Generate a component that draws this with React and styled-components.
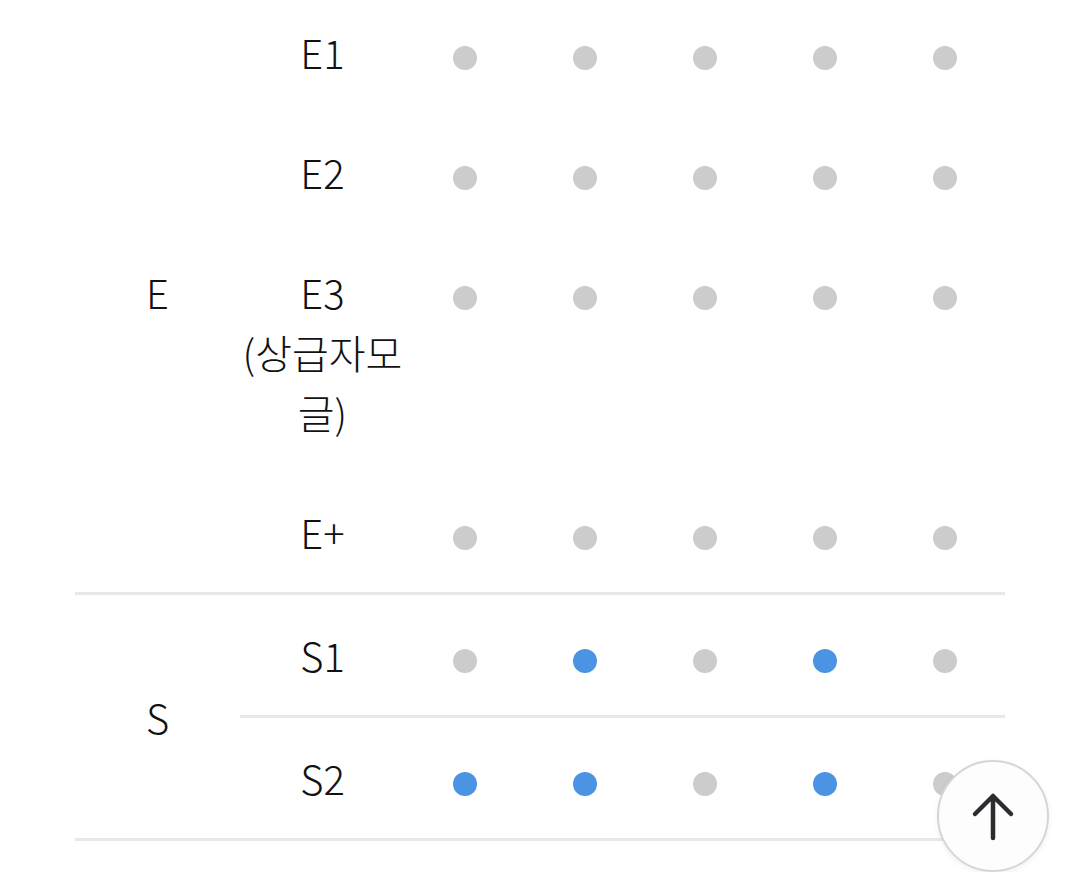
import React from "react";
import styled, { createGlobalStyle } from "styled-components";

const GlobalStyle = createGlobalStyle`
  html, body {
    margin: 0;
    padding: 0;
    background: #ffffff;
    overflow: hidden;
  }
  body {
    font-family: "Noto Sans CJK KR Light", "Noto Sans CJK KR", "Noto Sans", sans-serif;
    color: #111111;
  }
`;

const Page = styled.div`
  width: 1080px;
  height: 872px;
  overflow: hidden;
  padding: 0 75px;
  box-sizing: border-box;
`;

const Table = styled.div`
  margin-top: -8px;
  width: 930px;
`;

const Group = styled.div`
  display: grid;
  grid-template-columns: 165px 1fr;
  border-bottom: 3px solid #e8e8e8;
`;

const GroupLabel = styled.div`
  display: flex;
  align-items: center;
  justify-content: center;
  font-size: 40px;
  font-weight: 300;
  line-height: 60px;
`;

const Rows = styled.div`
  display: flex;
  flex-direction: column;
`;

const Row = styled.div`
  display: grid;
  grid-template-columns: 165px repeat(5, 120px);
  align-items: start;
  border-top: ${(p) => (p.$divider ? "3px solid #e8e8e8" : "none")};
`;

const SubLabel = styled.div`
  padding: 30px 0;
  text-align: center;
  font-size: 40px;
  font-weight: 300;
  line-height: 60px;
  word-break: keep-all;
  overflow-wrap: anywhere;
`;

const DotCell = styled.div`
  padding: 30px 0;
  text-align: center;
  font-size: 40px;
  line-height: 60px;
`;

const Dot = styled.span`
  display: inline-block;
  width: 24px;
  height: 24px;
  border-radius: 50%;
  vertical-align: middle;
  background: ${(p) => (p.$on ? "#4a94e3" : "#cccccc")};
`;

const TopButton = styled.button`
  position: fixed;
  left: 937px;
  top: 760px;
  width: 112px;
  height: 112px;
  border-radius: 50%;
  border: 2px solid #d6d6d6;
  background: #fdfdfd;
  box-shadow: 0 2px 6px rgba(0, 0, 0, 0.06);
  display: flex;
  align-items: center;
  justify-content: center;
  padding: 0;
  cursor: pointer;
`;

const groups = [
  {
    name: "E",
    lines: false,
    rows: [
      { label: "E1", dots: [0, 0, 0, 0, 0] },
      { label: "E2", dots: [0, 0, 0, 0, 0] },
      { label: "E3 (상급자모글)", dots: [0, 0, 0, 0, 0] },
      { label: "E+", dots: [0, 0, 0, 0, 0] },
    ],
  },
  {
    name: "S",
    lines: true,
    rows: [
      { label: "S1", dots: [0, 1, 0, 1, 0] },
      { label: "S2", dots: [1, 1, 0, 1, 0] },
    ],
  },
];

export default function App() {
  return (
    <>
      <GlobalStyle />
      <Page>
        <Table>
          {groups.map((g) => (
            <Group key={g.name}>
              <GroupLabel>{g.name}</GroupLabel>
              <Rows>
                {g.rows.map((r, i) => (
                  <Row key={r.label} $divider={g.lines && i > 0}>
                    <SubLabel>{r.label}</SubLabel>
                    {r.dots.map((d, j) => (
                      <DotCell key={j}>
                        <Dot $on={d === 1} />
                      </DotCell>
                    ))}
                  </Row>
                ))}
              </Rows>
            </Group>
          ))}
        </Table>
      </Page>
      <TopButton aria-label="맨 위로">
        <svg width="56" height="56" viewBox="0 0 56 56" fill="none">
          <path
            d="M10 26 L28 8 L46 26 M28 8 V50"
            stroke="#2b2b30"
            strokeWidth="4.5"
            strokeLinecap="round"
            strokeLinejoin="round"
          />
        </svg>
      </TopButton>
    </>
  );
}
